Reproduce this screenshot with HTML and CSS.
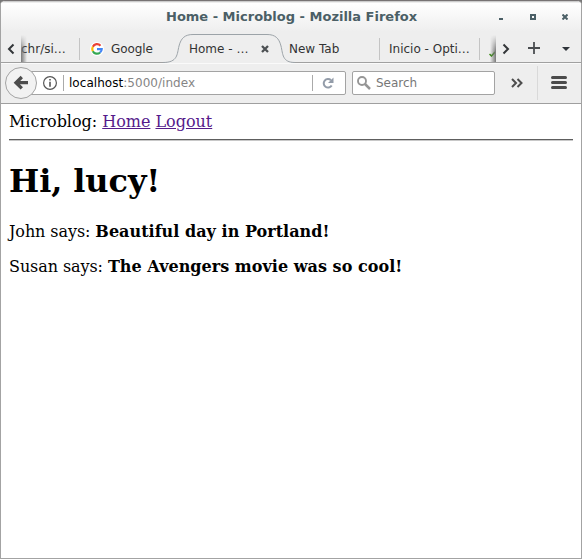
FILE: index.html
```html
<!DOCTYPE html>
<html lang="en">
<head>
<meta charset="utf-8">
<title>Home - Microblog</title>
<link rel="stylesheet" href="styles.css">
</head>
<body>
<div class="window">
  <header class="titlebar">
    <span class="title">Home - Microblog - Mozilla Firefox</span>
    <div class="controls">
      <svg width="5" height="6" viewBox="0 0 5 6"><path d="M0 4h4v2H0z" fill="#4b5f66"/></svg>
      <svg width="6" height="6" viewBox="0 0 6 6"><path d="M1 1h4v4H1z" fill="none" stroke="#4b5f66" stroke-width="2"/></svg>
      <svg width="6" height="6" viewBox="0 0 6 6"><path d="M.5.5l5 5M5.500.5l-5 5" fill="none" stroke="#4b5f66" stroke-width="2"/></svg>
    </div>
  </header>
  <nav class="tabs">
    <div class="scroll left"><svg width="8" height="12" viewBox="0 0 8 12"><path d="M6.500 1.500L2 6l4.500 4.500" fill="none" stroke="#333639" stroke-width="2"/></svg></div>
    <div class="tab first">chr/si…</div>
    <div class="tab google">
      <svg width="14" height="14" viewBox="0 0 14 14"><circle cx="7" cy="7" r="7" fill="#fff"/><g fill="none" stroke-width="2.200"><path d="M10.500 3.700A4.700 4.700 0 0 0 2.800 4.800" stroke="#ea4335"/><path d="M2.800 4.800a4.700 4.700 0 0 0 0 4.400" stroke="#fbbc05"/><path d="M2.800 9.200a4.700 4.700 0 0 0 7.300 1.300" stroke="#34a853"/><path d="M10.100 10.500a4.700 4.700 0 0 0 1.600-3.300H7" stroke="#4285f4"/></g></svg>
      <span>Google</span>
    </div>
    <div class="tab active">
      <svg class="shape" width="132" height="31" viewBox="0 0 132 31"><path d="M0 31V30.500C15 30.500 14 22 16 14C18 6 22 2.500 30 2.500H104C112 2.500 116 6 118 14C120 22 119 30.500 132 30.500V31z" fill="#eee"/><path d="M0 30.500C15 30.500 14 22 16 14C18 6 22 2.500 30 2.500H104C112 2.500 116 6 118 14C120 22 119 30.500 132 30.500" fill="none" stroke="#9ca3a8"/></svg>
      <span>Home - …</span>
      <svg class="close" width="8" height="8" viewBox="0 0 8 8"><path d="M1 1l6 6M7 1L1 7" stroke="#4c5053" stroke-width="2.300"/></svg>
    </div>
    <div class="tab newtab">New Tab</div>
    <div class="tab inicio">Inicio - Opti…</div>
    <div class="tab last"><svg width="6" height="6" viewBox="0 0 6 6"><path d="M.5 3l2 2L6 1" fill="none" stroke="#378b12" stroke-width="1.500"/></svg></div>
    <div class="scroll right"><svg width="8" height="12" viewBox="0 0 8 12"><path d="M1.500 1.500L6 6l-4.500 4.500" fill="none" stroke="#333639" stroke-width="2"/></svg></div>
    <div class="add"><svg width="12" height="12" viewBox="0 0 12 12"><path d="M6 0v12M0 6h12" stroke="#4a4d50" stroke-width="1.800"/></svg></div>
    <div class="all"><svg width="8" height="4" viewBox="0 0 8 4"><path d="M0 0h8L4 4z" fill="#2f343a"/></svg></div>
  </nav>
  <div class="toolbar">
    <div class="back"><svg width="32" height="32" viewBox="0 0 32 32"><circle cx="16" cy="16" r="15.500" fill="#f2f2f2" stroke="#a3a3a3"/><path d="M16.800 10L11 15.700l5.800 5.700M11.500 15.700H23" fill="none" stroke="#4d4d4d" stroke-width="3.300"/></svg></div>
    <div class="url">
      <svg class="info" width="14" height="14" viewBox="0 0 14 14"><circle cx="7" cy="7" r="6.400" fill="none" stroke="#555" stroke-width="1.200"/><path d="M6.200 3h1.600v1.600H6.200zM6.200 5.800h1.600v5H6.200z" fill="#555"/></svg>
      <i></i>
      <span class="address"><b>localhost</b>:5000/index</span>
      <i></i>
      <svg class="reload" width="12" height="12" viewBox="0 0 12 12"><path d="M9.700 8.500A4.300 4.300 0 1 1 9 3.200" fill="none" stroke="#939ca9" stroke-width="2"/><path d="M11.500.5V6H6z" fill="#939ca9"/></svg>
    </div>
    <div class="search">
      <svg width="14" height="14" viewBox="0 0 14 14"><circle cx="5" cy="5" r="4" fill="none" stroke="#969696" stroke-width="1.900"/><path d="M8 8l5 5" stroke="#969696" stroke-width="2.500"/></svg>
      <span>Search</span>
    </div>
    <svg class="more" width="12" height="10" viewBox="0 0 12 10"><path d="M1 1l4 4-4 4M6.500 1l4 4-4 4" fill="none" stroke="#4d4d4d" stroke-width="2"/></svg>
    <div class="divider"></div>
    <svg class="menu" width="16" height="13" viewBox="0 0 16 13"><path d="M1.500 1.500h13M1.500 6.500h13M1.500 11.500h13" stroke="#4b4b4b" stroke-width="3" stroke-linecap="round"/></svg>
  </div>
  <main class="page">
    <div class="nav">Microblog: <a href="#">Home</a> <a href="#">Logout</a></div>
    <hr>
    <h1>Hi, lucy!</h1>
    <p>John says: <b>Beautiful day in Portland!</b></p>
    <p>Susan says: <b>The Avengers movie was so cool!</b></p>
  </main>
</div>
</body>
</html>
```
FILE: styles.css
```css
* { box-sizing: border-box; }
html { background: #777; }
body { margin: 0; font-family: "DejaVu Sans", sans-serif; }
svg { display: block; flex: none; }
.window {
  height: 559px;
  border: 1px solid #a3a3a3;
  border-top-color: #777374;
  border-radius: 5px 5px 0 0;
  background: #fff;
  overflow: hidden;
}
.titlebar {
  height: 31px;
  background: linear-gradient(#bbb 0, #fff 2px, #eee 100%);
  display: flex;
  align-items: center;
  justify-content: flex-end;
  padding-right: 13px;
}
.title {
  width: 252px;
  margin-right: 81px;
  white-space: nowrap;
  font: bold 13px/18px "DejaVu Sans", sans-serif;
  color: #4b5f66;
}
.controls { display: flex; gap: 26px; }
.tabs {
  height: 31px;
  display: flex;
  background: #eee;
  border-bottom: 1px solid #a0a0a0;
  font-size: 12px;
  color: #333;
}
.scroll { display: flex; align-items: center; position: relative; z-index: 2; }
.left { width: 20px; padding: 4px 0 0 6px; }
.right { width: 25px; padding: 3px 0 0 6px; background: #eee; }
.left::after, .right::before {
  content: "";
  position: absolute;
  top: 3px;
  width: 6px;
  height: 27px;
  background: linear-gradient(90deg, #777, transparent);
}
.left::after { left: 20px; -webkit-mask-image: linear-gradient(transparent, #000 60%); }
.right::before { left: -6px; background: linear-gradient(270deg, #777, transparent); -webkit-mask-image: linear-gradient(transparent, #000 60%); }
.tab {
  display: flex;
  align-items: center;
  position: relative;
  width: 100px;
  padding: 4px 0 0 9px;
  white-space: nowrap;
  flex: none;
}
.first { width: 59px; padding-left: 0; }
.google { width: 100px; gap: 7px; padding-left: 10px; letter-spacing: -.1px; }
.active { z-index: 1; padding-left: 9px; }
.active span { width: 72px; position: relative; }
.shape { position: absolute; left: -17px; top: 0; }
.close { position: relative; }
.last { width: 16px; padding: 14px 0 0 9px; overflow: hidden; }
.first::after, .newtab::after, .inicio::after {
  content: "";
  position: absolute;
  right: 0;
  top: 6px;
  width: 1px;
  height: 22px;
  background: #c4c4c4;
}
.add { width: 32px; padding: 10px 0 0 7px; }
.all { padding: 15px 0 0 9px; }
.toolbar {
  height: 41px;
  display: flex;
  align-items: center;
  background: #eee;
  border-top: 1px solid #fafafa;
  border-bottom: 1px solid #9f9f9f;
  font-size: 12px;
  padding: 0 0 1px 4px;
}
.back { position: relative; z-index: 1; }
.url, .search {
  height: 24px;
  display: flex;
  align-items: center;
  background: #fff;
  border: 1px solid #a3a3a3;
  border-radius: 2px;
}
.url { width: 317px; margin-left: -8px; padding-left: 13px; }
.url i { width: 1px; height: 16px; background: #aaa; }
.info { margin-right: 6px; }
.address { width: 248px; padding-left: 5px; color: #858585; letter-spacing: .04px; }
.address b { font-weight: normal; color: #000; }
.reload { margin-left: 9px; }
.search { width: 143px; margin-left: 6px; padding-left: 4px; gap: 5px; color: #777; }
.more { margin-left: 16px; }
.divider { width: 1px; height: 34px; margin: 0 13px 0 14px; background: #d9d9d9; }
.menu { margin-bottom: 1px; }
.page {
  padding: 8px;
  font: 16px/19px "DejaVu Serif", serif;
  color: #000;
}
.nav { letter-spacing: -.02px; }
.page a { color: #551a8b; }
.page hr { margin: 8px 0; border: 0; height: 2px; background: linear-gradient(#5e5e5e 50%, #c8c8c8 50%); }
h1 { margin: 21px 0 22px; font-size: 32px; line-height: 38px; letter-spacing: -.1px; }
p { margin: 16px 0; letter-spacing: -.08px; }
p b { letter-spacing: .03px; }
```
